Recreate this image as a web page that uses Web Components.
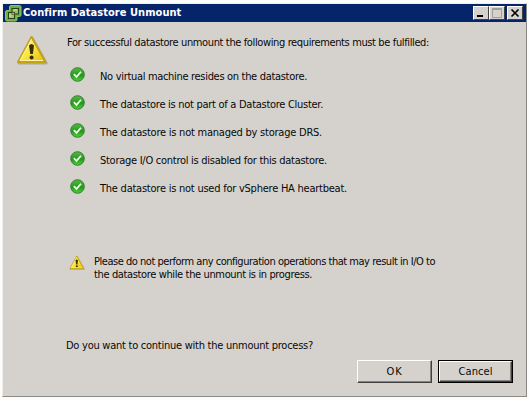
<!DOCTYPE html>
<html lang="en">
<head>
<meta charset="utf-8">
<title>Confirm Datastore Unmount</title>
<style>
  body {
    margin: 0;
    padding: 3px 2px;
    box-sizing: border-box;
    width: 529px;
    height: 400px;
    overflow: hidden;
    background: #fcfcfa;
    color: #080808;
    font: 11px/13px "DejaVu Sans Condensed", "DejaVu Sans", sans-serif;
  }
</style>
</head>
<body>
<dialog-window>
  <fit-text slot="title" width="158">Confirm Datastore Unmount</fit-text>
  <fit-text slot="intro" width="362">For successful datastore unmount the following requirements must be fulfilled:</fit-text>
  <check-item><fit-text width="207">No virtual machine resides on the datastore.</fit-text></check-item>
  <check-item><fit-text width="223">The datastore is not part of a Datastore Cluster.</fit-text></check-item>
  <check-item><fit-text width="222">The datastore is not managed by storage DRS.</fit-text></check-item>
  <check-item><fit-text width="227">Storage I/O control is disabled for this datastore.</fit-text></check-item>
  <check-item><fit-text width="247">The datastore is not used for vSphere HA heartbeat.</fit-text></check-item>
  <note-text slot="note">
    <fit-text width="341">Please do not perform any configuration operations that may result in I/O to</fit-text>
    <fit-text width="218">the datastore while the unmount is in progress.</fit-text>
  </note-text>
  <fit-text slot="question" width="247">Do you want to continue with the unmount process?</fit-text>
  <push-button slot="buttons"><fit-text width="16">OK</fit-text></push-button>
  <push-button slot="buttons" focused><fit-text width="34">Cancel</fit-text></push-button>
</dialog-window>

<script>
// One line of text, spaced to the given width.
class FitText extends HTMLElement {
  constructor() {
    super();
    const shadow = this.attachShadow({ mode: 'open' });
    shadow.innerHTML = `
    <style>
      :host {
        display: block;
        white-space: nowrap;
      }

      span {
        display: inline-block;
      }
    </style>
    <span><slot></slot></span>
    `;
  }

  connectedCallback() {
    const width = Number(this.getAttribute('width'));
    const span = this.shadowRoot.querySelector('span');
    const natural = span.getBoundingClientRect().width;
    const count = this.textContent.length;
    span.style.letterSpacing = `${(width - natural) / count}px`;
  }
}

class WarningIcon extends HTMLElement {
  constructor() {
    super();
    const shadow = this.attachShadow({ mode: 'open' });
    shadow.innerHTML = `
    <style>
      :host {
        display: block;
        width: 32px;
        height: 30px;
      }

      svg {
        display: block;
        width: 100%;
        height: 100%;
      }
    </style>
    <svg viewBox="0 0 32 30">
      <defs>
        <linearGradient id="g" x1="0" y1="0" x2="1" y2="1">
          <stop offset="0" stop-color="#fffbb0"/>
          <stop offset=".5" stop-color="#fbe744"/>
          <stop offset="1" stop-color="#e5b90b"/>
        </linearGradient>
      </defs>
      <path d="M16 3 L30 28 H3Z" fill="none" stroke="#aaa79c" stroke-width="3" stroke-linejoin="round"/>
      <path d="M15.500 2 L29.500 27 H2Z" fill="url(#g)" stroke="#c5a116" stroke-width="2" stroke-linejoin="round"/>
      <path d="M15.500 4 L4 25.500 H27" fill="none" stroke="#fff8a0" stroke-width="1"/>
      <path d="M13 10.500 Q15.500 7.500 18 10.500 L16.900 19 H14.300Z" fill="#39300b"/>
      <circle cx="15.600" cy="22.500" r="2" fill="#39300b"/>
    </svg>
    `;
  }
}

class CheckItem extends HTMLElement {
  constructor() {
    super();
    const shadow = this.attachShadow({ mode: 'open' });
    shadow.innerHTML = `
    <style>
      :host {
        display: flex;
        align-items: center;
        gap: 15px;
        height: 28px;
      }

      svg {
        width: 15px;
        height: 15px;
        margin-top: -3px;
      }
    </style>
    <svg viewBox="0 0 15 15">
      <defs>
        <linearGradient id="g" x1="0" y1="0" x2="0" y2="1">
          <stop offset="0" stop-color="#58b849"/>
          <stop offset=".55" stop-color="#24991d"/>
          <stop offset="1" stop-color="#50d335"/>
        </linearGradient>
      </defs>
      <circle cx="7.500" cy="7.500" r="6.800" fill="url(#g)" stroke="#31802b"/>
      <path d="M3.800 7.200 L6.500 9.900 L11 4.700" fill="none" stroke="#f4fff0" stroke-width="1.700"/>
    </svg>
    <slot></slot>
    `;
  }
}

class NoteText extends HTMLElement {
  constructor() {
    super();
    const shadow = this.attachShadow({ mode: 'open' });
    shadow.innerHTML = `
    <style>
      :host {
        display: flex;
        gap: 9px;
      }

      warning-icon {
        width: 16px;
        height: 15px;
      }
    </style>
    <warning-icon></warning-icon>
    <div><slot></slot></div>
    `;
  }
}

class PushButton extends HTMLElement {
  constructor() {
    super();
    const shadow = this.attachShadow({ mode: 'open' });
    shadow.innerHTML = `
    <style>
      :host {
        display: block;
        box-sizing: border-box;
        width: 75px;
        height: 23px;
      }

      button {
        display: flex;
        align-items: center;
        justify-content: center;
        box-sizing: border-box;
        width: 100%;
        height: 100%;
        padding: 0;
        border: 1px solid;
        border-color: #fff #404040 #404040 #fff;
        box-shadow: inset -1px -1px #858381;
        background: #d5d2cd;
        color: inherit;
        font: inherit;
      }

      :host([focused]) {
        border: 1px solid #000;
      }
    </style>
    <button><slot></slot></button>
    `;
  }
}

class TitleBar extends HTMLElement {
  constructor() {
    super();
    const shadow = this.attachShadow({ mode: 'open' });
    shadow.innerHTML = `
    <style>
      :host {
        display: flex;
        align-items: center;
        box-sizing: border-box;
        height: 18px;
        padding: 0 3px 0 2px;
        background: #06246a;
        color: #fff;
        font: bold 11px/18px "DejaVu Sans Condensed", "DejaVu Sans", sans-serif;
      }

      .logo {
        width: 17px;
        height: 17px;
        margin-right: 1px;
      }

      .controls {
        display: flex;
        margin-left: auto;
      }

      .controls svg {
        box-sizing: border-box;
        width: 16px;
        height: 14px;
        border: 1px solid;
        border-color: #fff #404040 #404040 #fff;
        background: #d5d2cd;
      }

      .controls svg:last-child {
        margin-left: 2px;
      }
    </style>
    <svg class="logo" viewBox="0 0 17 17">
      <path d="M6 .500 H14.500 Q16 .500 16 2 V10 Q16 11.500 14.500 11.500 H12 V14.500 Q12 16 10.500 16 H2 Q.500 16 .500 14.500 V7 Q.500 5.500 2 5.500 H4.500 V2 Q4.500 .500 6 .500Z" fill="#6fae45" stroke="#8fc36a"/>
      <rect x="7" y="3.500" width="6.500" height="5.500" fill="#8fc262" stroke="#26421c"/>
      <rect x="3.500" y="7.500" width="6" height="6" fill="#a4c66c" stroke="#26421c"/>
      <path d="M7 7.500 H9.500 V9.500 H7Z" fill="#f0c356" stroke="#26421c" stroke-width=".6"/>
      <path d="M8.500 5 H12M5 9.500 V12" fill="none" stroke="#e6e3a0"/>
    </svg>
    <slot></slot>
    <div class="controls">
      <svg viewBox="0 0 14 12"><path d="M3 9 H9" stroke="#000" stroke-width="2"/></svg>
      <svg viewBox="0 0 14 12"><path d="M2.500 1.500 H11.500 V10.500 H2.500Z M2 2.500 H12" fill="none" stroke="#a09e9b"/></svg>
      <svg viewBox="0 0 14 12"><path d="M3.500 2.500 L10.500 9.500 M10.500 2.500 L3.500 9.500" stroke="#000" stroke-width="1.700"/></svg>
    </div>
    `;
  }
}

class DialogWindow extends HTMLElement {
  constructor() {
    super();
    const shadow = this.attachShadow({ mode: 'open' });
    shadow.innerHTML = `
    <style>
      :host {
        display: flex;
        flex-direction: column;
        box-sizing: border-box;
        height: 394px;
        border: 1px solid;
        border-color: #f0eeea #8b8986 #8b8986 #f0eeea;
        background: #d5d2cd;
      }

      .body {
        display: grid;
        grid-template-columns: 32px 1fr;
        column-gap: 16px;
        padding: 13px 0 0 13px;
      }

      .intro {
        padding: 1px 0 0 3px;
        height: 26px;
      }

      .checks {
        padding-left: 6px;
      }

      .note {
        margin-top: 53px;
        padding-left: 5px;
      }

      .question {
        margin-top: 58px;
        padding-left: 2px;
      }

      .buttons {
        display: flex;
        justify-content: flex-end;
        gap: 6px;
        margin-top: auto;
        padding: 0 13px 13px 0;
      }
    </style>
    <title-bar><slot name="title"></slot></title-bar>
    <div class="body">
      <warning-icon></warning-icon>
      <div>
        <div class="intro"><slot name="intro"></slot></div>
        <div class="checks"><slot></slot></div>
        <div class="note"><slot name="note"></slot></div>
        <div class="question"><slot name="question"></slot></div>
      </div>
    </div>
    <div class="buttons"><slot name="buttons"></slot></div>
    `;
  }
}

customElements.define('warning-icon', WarningIcon);
customElements.define('check-item', CheckItem);
customElements.define('note-text', NoteText);
customElements.define('push-button', PushButton);
customElements.define('title-bar', TitleBar);
customElements.define('dialog-window', DialogWindow);
// Measured last, when every parent already has its layout.
customElements.define('fit-text', FitText);
</script>
</body>
</html>
